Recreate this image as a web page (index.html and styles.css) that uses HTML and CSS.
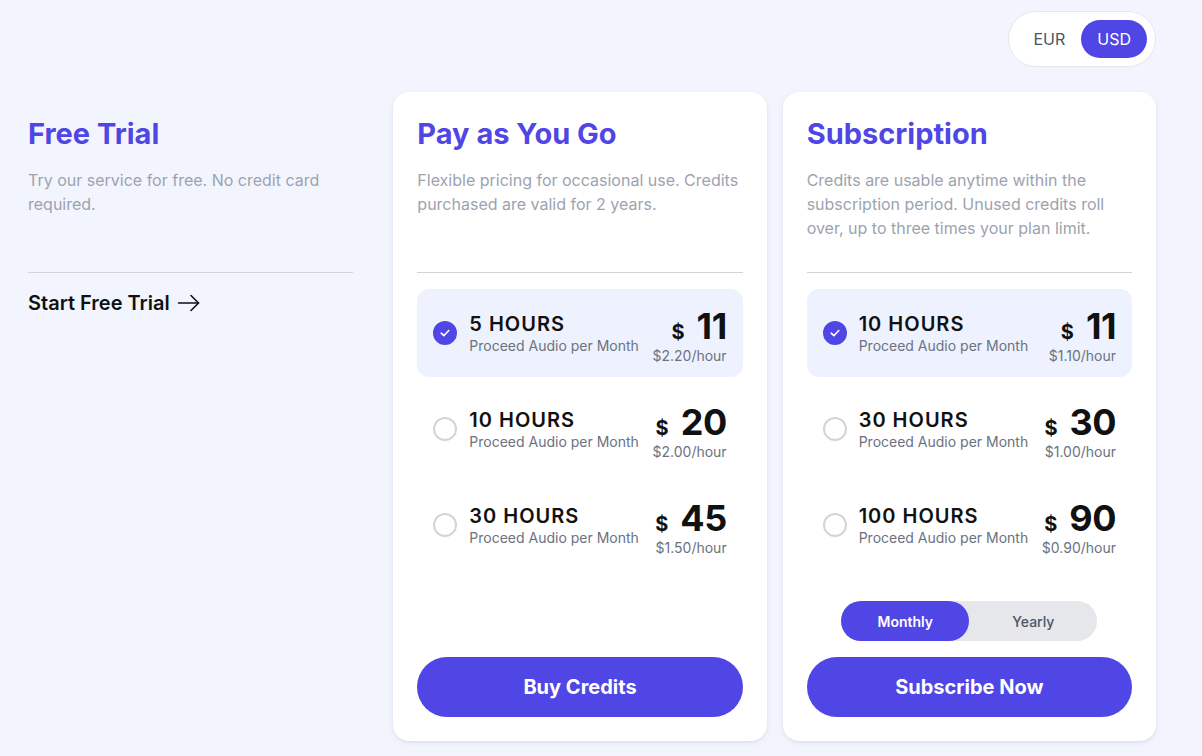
FILE: index.html
```html
<!DOCTYPE html>
<html lang="en">
<head>
<meta charset="utf-8">
<title>Pricing</title>
<link rel="stylesheet" href="styles.css">
</head>
<body>
<div class="page">
  <div class="topbar">
    <div class="currency">
      <button class="cur">EUR</button>
      <button class="cur active">USD</button>
    </div>
  </div>
  <div class="plans">
    <div class="col free">
      <h2 class="title">Free Trial</h2>
      <p class="desc">Try our service for free. No credit card required.</p>
      <hr class="divider">
      <a class="trial-link">Start Free Trial
        <svg class="arrow" width="24" height="24" viewBox="0 0 24 24" fill="none" stroke="#111" stroke-width="1.6" stroke-linecap="round" stroke-linejoin="round"><path d="M1.5 12h20"/><path d="M14 4.5l7.5 7.5-7.5 7.5"/></svg>
      </a>
    </div>

    <div class="col card">
      <h2 class="title">Pay as You Go</h2>
      <p class="desc">Flexible pricing for occasional use. Credits purchased are valid for 2 years.</p>
      <hr class="divider">
      <div class="options">
        <div class="option selected">
          <span class="radio checked"><svg width="12" height="12" viewBox="0 0 12 12" fill="none" stroke="#fff" stroke-width="1.6" stroke-linecap="round" stroke-linejoin="round"><path d="M2.2 6.2l2.6 2.5 5-5.2"/></svg></span>
          <div class="opt-text"><div class="hours">5 HOURS</div><div class="sub">Proceed Audio per Month</div></div>
          <div class="price"><div class="amount"><span class="cur-sign">$</span><span class="num">11</span></div><div class="rate">$2.20/hour</div></div>
        </div>
        <div class="option">
          <span class="radio"></span>
          <div class="opt-text"><div class="hours">10 HOURS</div><div class="sub">Proceed Audio per Month</div></div>
          <div class="price"><div class="amount"><span class="cur-sign">$</span><span class="num">20</span></div><div class="rate">$2.00/hour</div></div>
        </div>
        <div class="option">
          <span class="radio"></span>
          <div class="opt-text"><div class="hours">30 HOURS</div><div class="sub">Proceed Audio per Month</div></div>
          <div class="price"><div class="amount"><span class="cur-sign">$</span><span class="num">45</span></div><div class="rate">$1.50/hour</div></div>
        </div>
      </div>
      <div class="footer">
        <button class="cta">Buy Credits</button>
      </div>
    </div>

    <div class="col card">
      <h2 class="title">Subscription</h2>
      <p class="desc">Credits are usable anytime within the subscription period. Unused credits roll over, up to three times your plan limit.</p>
      <hr class="divider">
      <div class="options">
        <div class="option selected">
          <span class="radio checked"><svg width="12" height="12" viewBox="0 0 12 12" fill="none" stroke="#fff" stroke-width="1.6" stroke-linecap="round" stroke-linejoin="round"><path d="M2.2 6.2l2.6 2.5 5-5.2"/></svg></span>
          <div class="opt-text"><div class="hours">10 HOURS</div><div class="sub">Proceed Audio per Month</div></div>
          <div class="price"><div class="amount"><span class="cur-sign">$</span><span class="num">11</span></div><div class="rate">$1.10/hour</div></div>
        </div>
        <div class="option">
          <span class="radio"></span>
          <div class="opt-text"><div class="hours">30 HOURS</div><div class="sub">Proceed Audio per Month</div></div>
          <div class="price"><div class="amount"><span class="cur-sign">$</span><span class="num">30</span></div><div class="rate">$1.00/hour</div></div>
        </div>
        <div class="option">
          <span class="radio"></span>
          <div class="opt-text"><div class="hours">100 HOURS</div><div class="sub">Proceed Audio per Month</div></div>
          <div class="price"><div class="amount"><span class="cur-sign">$</span><span class="num">90</span></div><div class="rate">$0.90/hour</div></div>
        </div>
      </div>
      <div class="footer">
        <div class="period">
          <button class="per active">Monthly</button>
          <button class="per">Yearly</button>
        </div>
        <button class="cta">Subscribe Now</button>
      </div>
    </div>
  </div>
</div>
</body>
</html>
```
FILE: styles.css
```css
* { box-sizing: border-box; }
html, body { margin: 0; padding: 0; }
body {
  background: #F3F5FE;
  font-family: Inter, "Noto Sans", sans-serif;
  color: #111;
  width: 1202px;
  height: 756px;
  overflow: hidden;
}
button { font-family: inherit; border: 0; cursor: pointer; }
.page {
  padding: 11px 46px 0 4px;
}
.topbar {
  display: flex;
  justify-content: flex-end;
}
.currency {
  display: flex;
  background: #fff;
  border: 1px solid #E5E7EB;
  border-radius: 28px;
  padding: 8px;
  height: 56px;
  align-items: center;
}
.cur {
  background: transparent;
  font-size: 16px;
  color: #4B5563;
  height: 38px;
  padding: 0 16px;
  border-radius: 19px;
}
.cur.active {
  background: #4F46E5;
  color: #fff;
}
.plans {
  margin-top: 25px;
  display: grid;
  grid-template-columns: repeat(3, 1fr);
  gap: 16px;
}
.col {
  padding: 24px;
  display: flex;
  flex-direction: column;
}
.card {
  background: #fff;
  border-radius: 16px;
  box-shadow: 0 2px 6px rgba(30, 40, 90, 0.08), 0 1px 2px rgba(30, 40, 90, 0.05);
}
.title {
  margin: 0;
  font-size: 29px;
  line-height: 36px;
  font-weight: 700;
  color: #4F46E5;
}
.desc {
  margin: 16px 0 0;
  font-size: 16px;
  line-height: 24px;
  color: #9CA3AF;
  min-height: 72px;
}
.divider {
  margin: 32px 0 0;
  border: 0;
  border-top: 1px solid #D1D5DB;
  height: 0;
}
.trial-link {
  margin-top: 16px;
  display: flex;
  align-items: center;
  gap: 7px;
  font-size: 20px;
  line-height: 28px;
  font-weight: 600;
  color: #111;
}
.options {
  margin-top: 16px;
  display: flex;
  flex-direction: column;
  gap: 8px;
}
.option {
  height: 88px;
  border-radius: 12px;
  padding: 0 16px;
  display: flex;
  align-items: center;
}
.option.selected { background: #EEF2FF; }
.radio {
  width: 24px;
  height: 24px;
  border-radius: 50%;
  border: 2px solid #D1D5DB;
  flex: none;
  display: flex;
  align-items: center;
  justify-content: center;
}
.radio.checked {
  background: #4F46E5;
  border-color: #4F46E5;
}
.opt-text {
  margin-left: 12px;
  flex: 1;
  margin-top: 2px;
}
.hours {
  font-size: 20px;
  line-height: 24px;
  font-weight: 600;
  letter-spacing: 1px;
  color: #111;
}
.sub {
  font-size: 14px;
  line-height: 20px;
  color: #6B7280;
}
.price {
  display: flex;
  flex-direction: column;
  align-items: flex-end;
  margin-top: 6px;
}
.amount {
  display: flex;
  align-items: baseline;
  gap: 12px;
  line-height: 40px;
}
.cur-sign {
  font-size: 20px;
  font-weight: 700;
}
.num {
  font-size: 36px;
  font-weight: 700;
  letter-spacing: -0.5px;
}
.rate {
  font-size: 14px;
  line-height: 20px;
  margin-top: -6px;
  color: #6B7280;
}
.footer {
  margin-top: auto;
  padding-top: 32px;
  display: flex;
  flex-direction: column;
  align-items: center;
  gap: 16px;
}
.period {
  display: flex;
  width: 256px;
  height: 40px;
  background: #E5E7EB;
  border-radius: 20px;
}
.per {
  width: 128px;
  height: 40px;
  border-radius: 20px;
  background: transparent;
  font-size: 14px;
  font-weight: 500;
  color: #4B5563;
}
.per.active {
  background: #4F46E5;
  color: #fff;
  font-weight: 600;
}
.cta {
  width: 100%;
  height: 60px;
  border-radius: 30px;
  background: #4F46E5;
  color: #fff;
  font-size: 20px;
  font-weight: 700;
}
```
